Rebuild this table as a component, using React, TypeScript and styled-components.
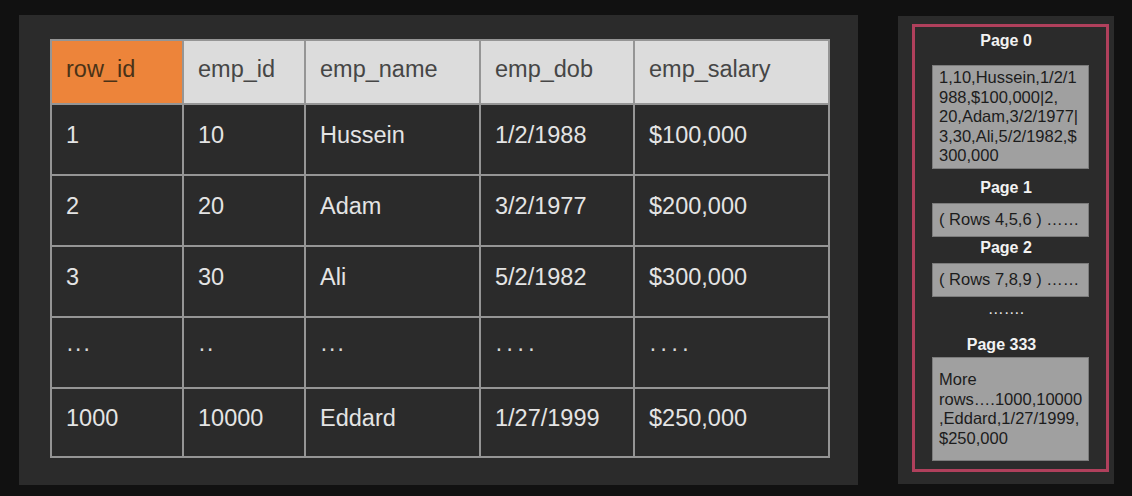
import React from "react";
import styled, { createGlobalStyle } from "styled-components";

const GlobalStyle = createGlobalStyle`
  html, body {
    margin: 0;
    padding: 0;
    background: #111111;
  }
  body {
    font-family: "Liberation Sans", Arial, sans-serif;
  }
`;

const Page = styled.div`
  display: flex;
  align-items: flex-start;
  gap: 40px;
  padding: 15px 0 0 19px;
  width: 1132px;
  height: 496px;
  box-sizing: border-box;
`;

const TablePanel = styled.div`
  width: 839px;
  height: 470px;
  box-sizing: border-box;
  padding: 24px 0 0 31px;
  background: #2b2b2b;
`;

const Grid = styled.div`
  display: grid;
  grid-template-columns: 130px 120px 173px 152px 193px;
  grid-template-rows: 62px repeat(4, 69px) 67px;
  gap: 2px;
  padding: 2px;
  width: 780px;
  box-sizing: border-box;
  background: #959595;
`;

const Cell = styled.div<{ $head?: boolean; $accent?: boolean }>`
  display: flex;
  align-items: center;
  padding: 0 0 ${(p) => (p.$head ? "5px" : "9px")} 14px;
  font-size: 23.5px;
  white-space: nowrap;
  background: ${(p) => (p.$accent ? "#ed843a" : p.$head ? "#dcdcdc" : "#2b2b2b")};
  color: ${(p) => (p.$accent ? "#4a3217" : p.$head ? "#464646" : "#e4e4e4")};
`;

const Dots = styled.span<{ $wide?: boolean }>`
  letter-spacing: ${(p) => (p.$wide ? "3px" : "0.5px")};
  color: #d8d8d8;
`;

const PagePanel = styled.div`
  width: 216px;
  height: 468px;
  margin-top: 1px;
  box-sizing: border-box;
  padding: 8px 5px 12px 14px;
  background: #2b2b2b;
`;

const PageFrame = styled.div`
  height: 100%;
  box-sizing: border-box;
  border: 3px solid #b0405c;
  display: flex;
  flex-direction: column;
  align-items: center;
  padding-top: 4px;
`;

const PageLabel = styled.div<{ $top: number; $shift?: number }>`
  margin-top: ${(p) => p.$top}px;
  padding-right: ${(p) => p.$shift ?? 9}px;
  height: 20px;
  line-height: 20px;
  font-size: 16px;
  font-weight: 700;
  color: #f2f2f2;
`;

const Ellipsis = styled.div<{ $top: number }>`
  margin-top: ${(p) => p.$top}px;
  padding-right: 9px;
  height: 20px;
  line-height: 20px;
  font-size: 16px;
  color: #e8e8e8;
`;

const Block = styled.div<{ $top: number; $height: number }>`
  margin-top: ${(p) => p.$top}px;
  width: 157px;
  height: ${(p) => p.$height}px;
  box-sizing: border-box;
  background: #a0a0a0;
  border: 1px solid #7c7c7c;
  padding: 0 4px 0 6px;
  display: flex;
  flex-direction: column;
  justify-content: center;
  font-size: 16.5px;
  line-height: 19.5px;
  color: #1c1c1c;
  white-space: nowrap;
  overflow: hidden;
`;

const header = ["row_id", "emp_id", "emp_name", "emp_dob", "emp_salary"];

const rows: React.ReactNode[][] = [
  ["1", "10", "Hussein", "1/2/1988", "$100,000"],
  ["2", "20", "Adam", "3/2/1977", "$200,000"],
  ["3", "30", "Ali", "5/2/1982", "$300,000"],
  [
    <Dots>···</Dots>,
    <Dots>··</Dots>,
    <Dots>···</Dots>,
    <Dots $wide>····</Dots>,
    <Dots $wide>····</Dots>,
  ],
  ["1000", "10000", "Eddard", "1/27/1999", "$250,000"],
];

const App = () => {
  return (
    <>
      <GlobalStyle />
      <Page>
        <TablePanel>
          <Grid>
            {header.map((h, i) => (
              <Cell key={h} $head $accent={i === 0}>
                {h}
              </Cell>
            ))}
            {rows.map((row, r) =>
              row.map((value, c) => <Cell key={`${r}-${c}`}>{value}</Cell>)
            )}
          </Grid>
        </TablePanel>

        <PagePanel>
          <PageFrame>
            <PageLabel $top={0}>Page 0</PageLabel>
            <Block $top={14} $height={104}>
              <div>1,10,Hussein,1/2/1</div>
              <div>988,$100,000|2,</div>
              <div>20,Adam,3/2/1977|</div>
              <div>3,30,Ali,5/2/1982,$</div>
              <div>300,000</div>
            </Block>
            <PageLabel $top={9}>Page 1</PageLabel>
            <Block $top={5} $height={34}>
              <div>( Rows 4,5,6 ) ……</div>
            </Block>
            <PageLabel $top={1}>Page 2</PageLabel>
            <Block $top={5} $height={34}>
              <div>( Rows 7,8,9 ) ……</div>
            </Block>
            <Ellipsis $top={2}>…….</Ellipsis>
            <PageLabel $top={16} $shift={18}>
              Page 333
            </PageLabel>
            <Block $top={2} $height={104}>
              <div>More</div>
              <div>rows….1000,10000</div>
              <div>,Eddard,1/27/1999,</div>
              <div>$250,000</div>
            </Block>
          </PageFrame>
        </PagePanel>
      </Page>
    </>
  );
};

export default App;
